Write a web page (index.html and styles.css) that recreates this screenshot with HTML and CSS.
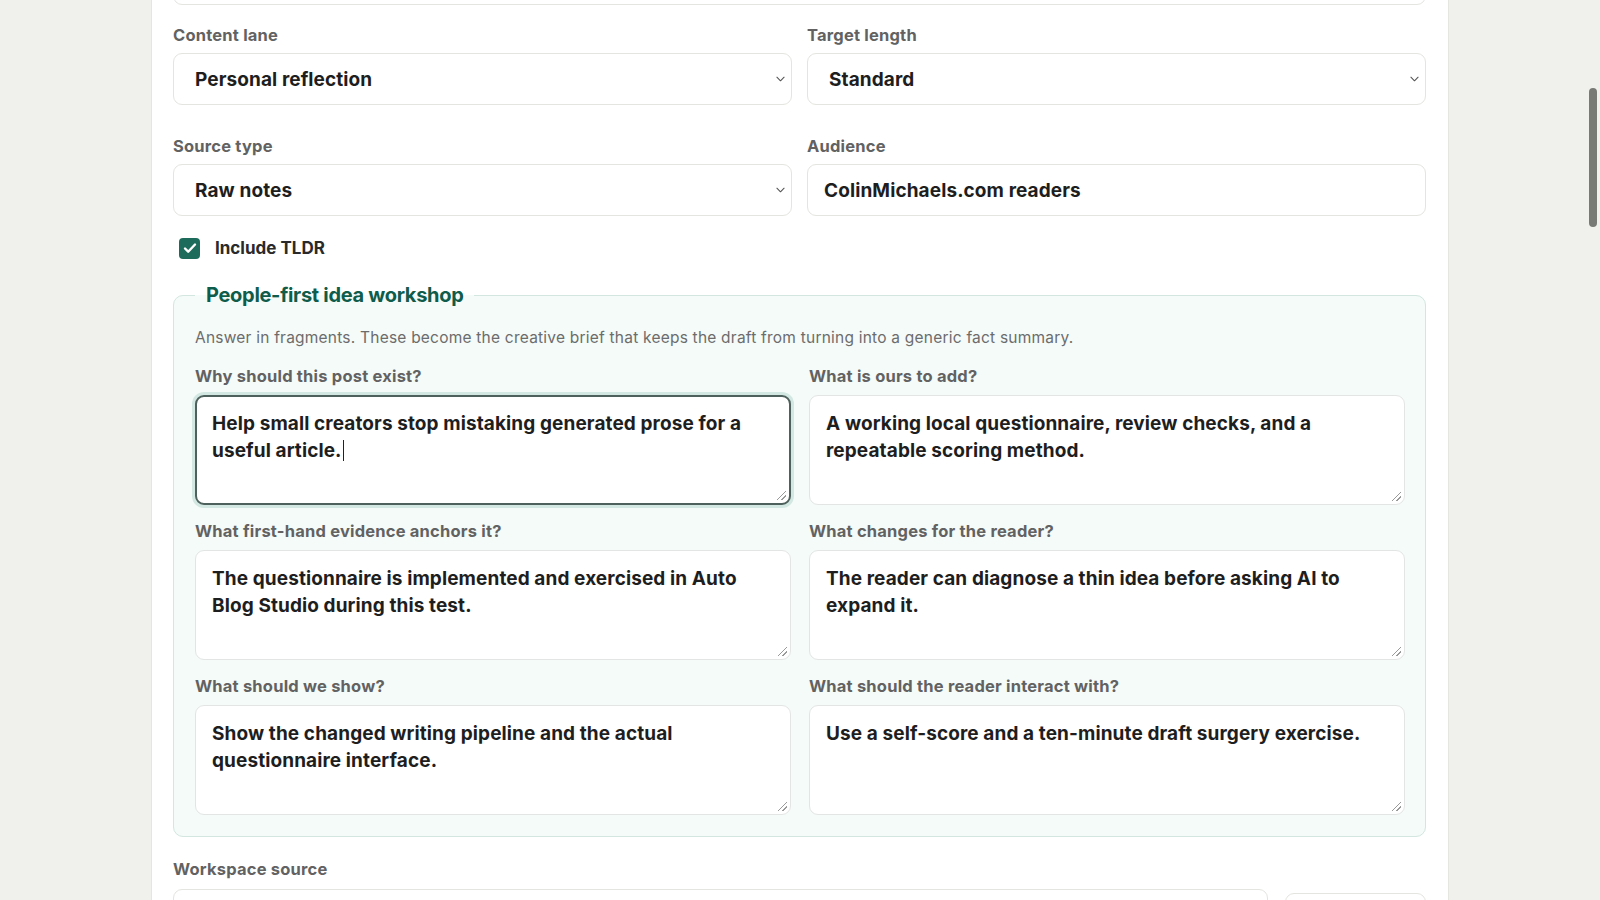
FILE: index.html
```html
<!DOCTYPE html>
<html lang="en">
<head>
<meta charset="utf-8">
<title>Auto Blog Studio</title>
<link rel="stylesheet" href="styles.css">
</head>
<body>
<div class="viewport">
  <main class="card">
    <div class="field top-field">
      <div class="input"></div>
    </div>

    <div class="grid2 row">
      <div class="field">
        <label class="label">Content lane</label>
        <div class="select"><span>Personal reflection</span><svg class="chev" viewBox="0 0 10 6" width="9" height="6"><path d="M1 1l4 4 4-4" fill="none" stroke="#555" stroke-width="1.2" stroke-linecap="round" stroke-linejoin="round"/></svg></div>
      </div>
      <div class="field">
        <label class="label">Target length</label>
        <div class="select"><span>Standard</span><svg class="chev" viewBox="0 0 10 6" width="9" height="6"><path d="M1 1l4 4 4-4" fill="none" stroke="#555" stroke-width="1.2" stroke-linecap="round" stroke-linejoin="round"/></svg></div>
      </div>
    </div>

    <div class="grid2 row row2">
      <div class="field">
        <label class="label">Source type</label>
        <div class="select"><span>Raw notes</span><svg class="chev" viewBox="0 0 10 6" width="9" height="6"><path d="M1 1l4 4 4-4" fill="none" stroke="#555" stroke-width="1.2" stroke-linecap="round" stroke-linejoin="round"/></svg></div>
      </div>
      <div class="field">
        <label class="label">Audience</label>
        <div class="input text-input">ColinMichaels.com readers</div>
      </div>
    </div>

    <div class="check-row">
      <span class="checkbox"><svg viewBox="0 0 20 20" width="20" height="20"><path d="M5 10.5l3.2 3.2L15 6.5" fill="none" stroke="#fff" stroke-width="2.4" stroke-linecap="round" stroke-linejoin="round"/></svg></span>
      <span class="check-label">Include TLDR</span>
    </div>

    <fieldset class="workshop">
      <legend>People-first idea workshop</legend>
      <p class="desc">Answer in fragments. These become the creative brief that keeps the draft from turning into a generic fact summary.</p>
      <div class="qgrid">
        <div class="field">
          <label class="label">Why should this post exist?</label>
          <div class="textarea focused">Help small creators stop mistaking generated prose for a useful article.<span class="caret"></span><span class="grip"></span></div>
        </div>
        <div class="field">
          <label class="label">What is ours to add?</label>
          <div class="textarea">A working local questionnaire, review checks, and a repeatable scoring method.<span class="grip"></span></div>
        </div>
        <div class="field">
          <label class="label">What first-hand evidence anchors it?</label>
          <div class="textarea">The questionnaire is implemented and exercised in Auto Blog Studio during this test.<span class="grip"></span></div>
        </div>
        <div class="field">
          <label class="label">What changes for the reader?</label>
          <div class="textarea">The reader can diagnose a thin idea before asking AI to expand it.<span class="grip"></span></div>
        </div>
        <div class="field">
          <label class="label">What should we show?</label>
          <div class="textarea">Show the changed writing pipeline and the actual questionnaire interface.<span class="grip"></span></div>
        </div>
        <div class="field">
          <label class="label">What should the reader interact with?</label>
          <div class="textarea">Use a self-score and a ten-minute draft surgery exercise.<span class="grip"></span></div>
        </div>
      </div>
    </fieldset>

    <div class="field ws">
      <label class="label">Workspace source</label>
      <div class="ws-row">
        <div class="input"></div>
        <div class="btn"></div>
      </div>
    </div>
  </main>
</div>
<div class="scroll-thumb"></div>
</body>
</html>
```

FILE: styles.css
```css
* { box-sizing: border-box; }
html, body { margin: 0; padding: 0; height: 100%; overflow: hidden; }
body {
  background: #f0f0ec;
  font-family: Inter, "Noto Sans", "Liberation Sans", sans-serif;
  color: #222;
}
.viewport { width: 1600px; height: 900px; overflow: hidden; }
.card {
  margin: -60px 0 0 151px;
  width: 1298px;
  background: #fff;
  border-left: 1px solid #e6e6e1;
  border-right: 1px solid #e6e6e1;
  padding: 0 22px 40px 21px;
  min-height: 1200px;
}
.field { display: flex; flex-direction: column; }
.label {
  font-size: 16.5px;
  line-height: 20px;
  font-weight: 700;
  color: #626262;
  margin-bottom: 8px;
  letter-spacing: 0.2px;
}
.top-field .input { height: 65px; }
.grid2 {
  display: grid;
  grid-template-columns: 619px 619px;
  column-gap: 15px;
}
.row { margin-top: 30px; }
.row2 { margin-top: 31px; }
.top-field + .row { margin-top: 20px; }
.select, .input {
  height: 52px;
  border: 1px solid #e4e4e0;
  border-radius: 9px;
  background: #fff;
  display: flex;
  align-items: center;
  font-size: 19px;
  font-weight: 700;
  color: #1e1e1e;
  letter-spacing: 0.1px;
}
.select { padding: 0 6px 0 21px; justify-content: space-between; }
.text-input { padding: 0 16px; }
.chev { display: block; }
.check-row {
  display: flex;
  align-items: center;
  gap: 15px;
  margin: 22px 0 0 6px;
  height: 20px;
}
.checkbox {
  width: 21px; height: 21px;
  border-radius: 4px;
  background: #1d6b5b;
  display: flex; align-items: center; justify-content: center;
}
.check-label { font-size: 17px; font-weight: 700; color: #2a2a2a; letter-spacing: 0; }
.workshop {
  margin: 25px 0 0 0;
  border: 1px solid #d3e6df;
  border-radius: 10px;
  background: #f5fbf9;
  padding: 8px 20px 21px 21px;
  min-width: 0;
}
.workshop legend {
  font-size: 20px;
  font-weight: 700;
  color: #0f5c4b;
  padding: 0 11px;
  margin-left: 0;
  letter-spacing: -0.3px;
  line-height: 24px;
}
.desc {
  margin: 13px 0 18px;
  font-size: 15.5px;
  line-height: 20px;
  color: #6c6c6c;
  letter-spacing: 0.22px;
}
.qgrid {
  display: grid;
  grid-template-columns: 596px 596px;
  column-gap: 18px;
  row-gap: 16px;
}
.qgrid .label { margin-bottom: 9px; }
.textarea {
  position: relative;
  height: 110px;
  border: 1px solid #e2e5e3;
  border-radius: 9px;
  background: #fff;
  padding: 14px 16px 0 16px;
  font-size: 19px;
  line-height: 27px;
  font-weight: 700;
  color: #1e1e1e;
  letter-spacing: 0.1px;
}
.textarea.focused {
  border: 2px solid #4f615c;
  padding: 13px 15px 0 15px;
  box-shadow: 0 0 0 3px #d3e8e2;
}
.caret {
  display: inline-block;
  width: 1px; height: 21px;
  background: #222;
  vertical-align: -4px;
  margin-left: 1px;
}
.grip {
  position: absolute;
  right: 3px; bottom: 3px;
  width: 9px; height: 9px;
  background: linear-gradient(135deg, transparent 45%, #9a9a9a 45%, #9a9a9a 52%, transparent 52%, transparent 72%, #9a9a9a 72%, #9a9a9a 80%, transparent 80%);
}
.ws { margin-top: 22px; }
.ws .label { margin-bottom: 10px; }
.ws-row { display: flex; gap: 17px; align-items: flex-start; }
.ws-row .input { flex: 0 0 1095px; }
.ws-row .btn {
  flex: 0 0 141px;
  height: 44px;
  margin-top: 4px;
  border: 1px solid #e4e4e0;
  border-radius: 9px;
  background: #fff;
}
.scroll-thumb {
  position: fixed;
  left: 1589px;
  top: 88px;
  width: 8px;
  height: 139px;
  border-radius: 4px;
  background: #787a75;
}
```
